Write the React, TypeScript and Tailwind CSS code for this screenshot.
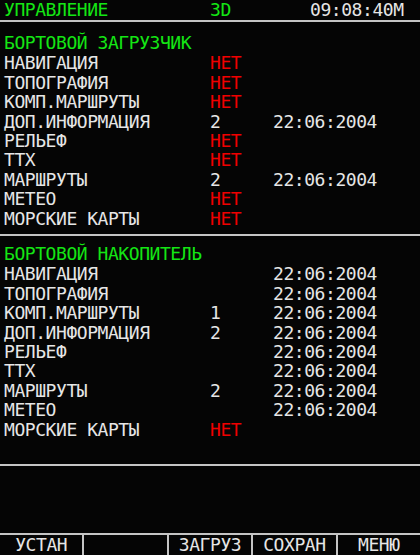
import React from "react";

type Row = { name: string; val?: string; red?: boolean; date?: string };

const loader: Row[] = [
  { name: "НАВИГАЦИЯ", val: "НЕТ", red: true },
  { name: "ТОПОГРАФИЯ", val: "НЕТ", red: true },
  { name: "КОМП.МАРШРУТЫ", val: "НЕТ", red: true },
  { name: "ДОП.ИНФОРМАЦИЯ", val: "2", date: "22:06:2004" },
  { name: "РЕЛЬЕФ", val: "НЕТ", red: true },
  { name: "ТТХ", val: "НЕТ", red: true },
  { name: "МАРШРУТЫ", val: "2", date: "22:06:2004" },
  { name: "МЕТЕО", val: "НЕТ", red: true },
  { name: "МОРСКИЕ КАРТЫ", val: "НЕТ", red: true },
];

const storage: Row[] = [
  { name: "НАВИГАЦИЯ", date: "22:06:2004" },
  { name: "ТОПОГРАФИЯ", date: "22:06:2004" },
  { name: "КОМП.МАРШРУТЫ", val: "1", date: "22:06:2004" },
  { name: "ДОП.ИНФОРМАЦИЯ", val: "2", date: "22:06:2004" },
  { name: "РЕЛЬЕФ", date: "22:06:2004" },
  { name: "ТТХ", date: "22:06:2004" },
  { name: "МАРШРУТЫ", val: "2", date: "22:06:2004" },
  { name: "МЕТЕО", date: "22:06:2004" },
  { name: "МОРСКИЕ КАРТЫ", val: "НЕТ", red: true },
];

function Rows({ rows }: { rows: Row[] }) {
  return (
    <div className="flex flex-col">
      {rows.map((r, i) => (
        <div key={i} className="flex h-[19.4px] leading-[19.4px] whitespace-pre">
          <span className="w-[206px] text-[#e6e6e6]">{r.name}</span>
          <span className={"w-[63px] " + (r.red ? "text-[#f00000]" : "text-[#e6e6e6]")}>
            {r.val ?? ""}
          </span>
          <span className="text-[#e6e6e6]">{r.date ?? ""}</span>
        </div>
      ))}
    </div>
  );
}

const buttons = ["УСТАН", "", "ЗАГРУЗ", "СОХРАН", "МЕНЮ"];

export default function App() {
  return (
    <div
      className="w-[420px] h-[555px] bg-[#050505] flex flex-col overflow-hidden text-[18px] tracking-[-0.44px]"
      style={{ fontFamily: '"DejaVu Sans Mono", "Liberation Mono", monospace' }}
    >
      <div className="h-[22px] border-b-2 border-[#c4c4c4] flex items-start leading-[20px] whitespace-pre pl-[4px]">
        <span className="w-[206px] text-[#14e614]">УПРАВЛЕНИЕ</span>
        <span className="w-[100px] text-[#14e614]">3D</span>
        <span className="text-[#e6e6e6]">09:08:40M</span>
      </div>

      <div className="h-[214px] border-b-2 border-[#c4c4c4] pt-[11px] pl-[4px]">
        <div className="h-[19.4px] leading-[19.4px] mb-[1px] text-[#14e614]">БОРТОВОЙ ЗАГРУЗЧИК</div>
        <Rows rows={loader} />
      </div>

      <div className="h-[230px] border-b-2 border-[#c4c4c4] pt-[8px] pl-[4px]">
        <div className="h-[19.4px] leading-[19.4px] mb-[1px] text-[#14e614]">БОРТОВОЙ НАКОПИТЕЛЬ</div>
        <Rows rows={storage} />
      </div>

      <div className="flex-1" />

      <div className="h-[22px] border-t-2 border-[#c4c4c4] flex">
        {buttons.map((b, i) => (
          <div
            key={i}
            className={
              "flex-1 h-[20px] leading-[20px] text-center text-[#e6e6e6] " +
              (i > 0 ? "border-l-2 border-[#c4c4c4]" : "")
            }
          >
            {b}
          </div>
        ))}
      </div>
    </div>
  );
}
